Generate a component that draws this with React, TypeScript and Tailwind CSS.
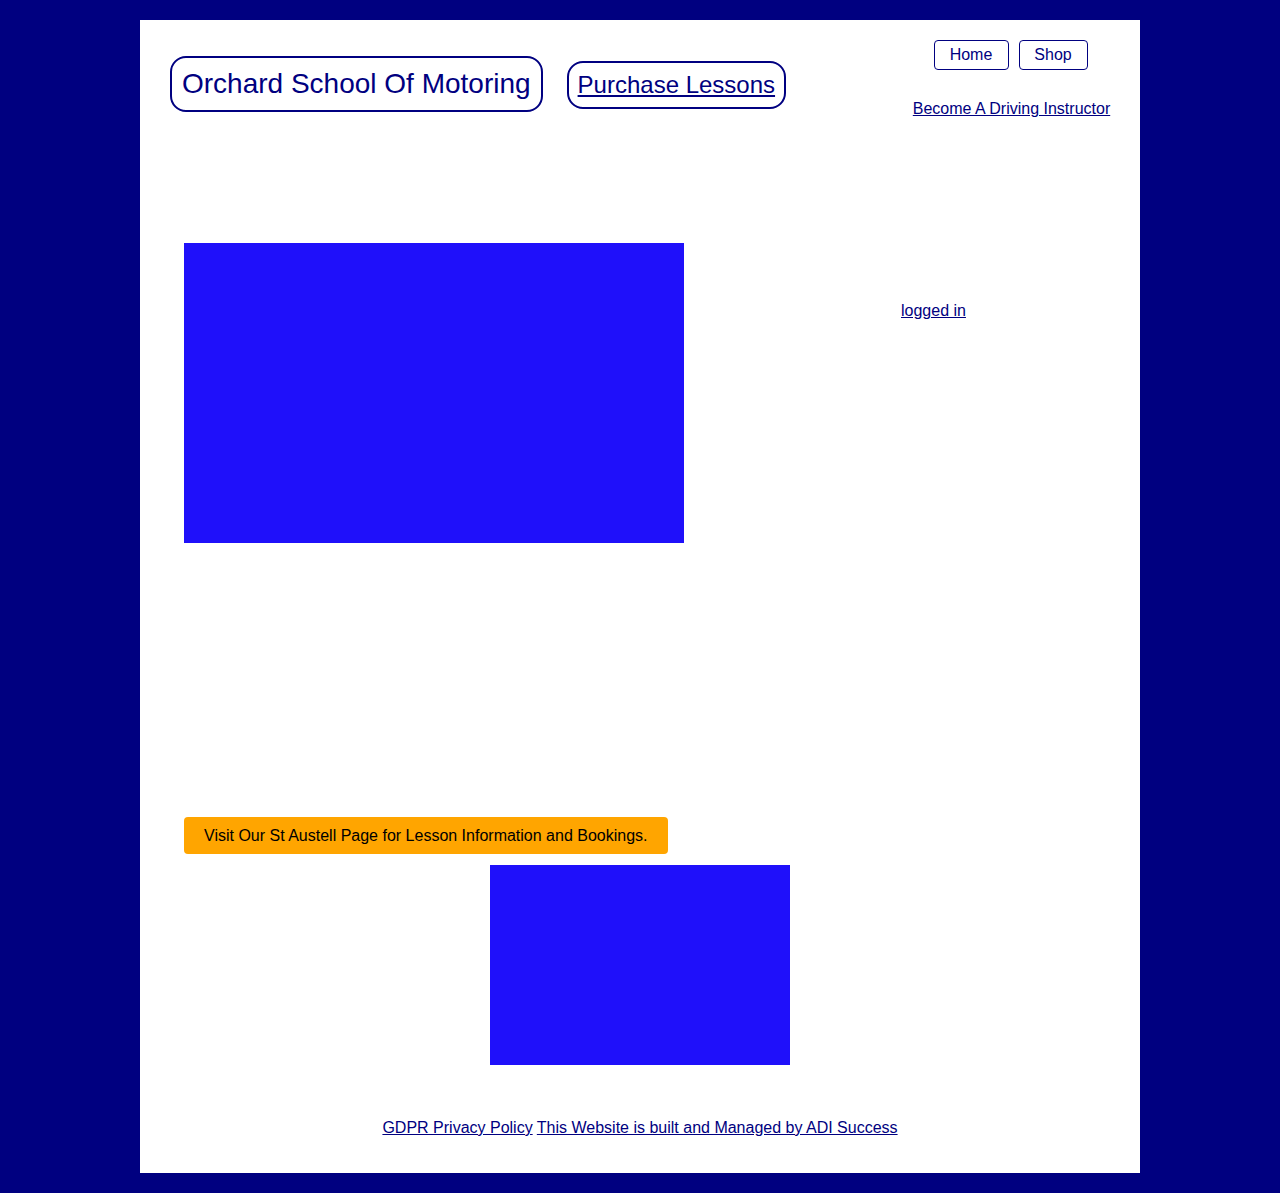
import React from "react";

export default function App() {
  const navy = "text-[#000080]";
  return (
    <div className="min-h-[1193px] bg-[#000080] py-5" style={{ fontFamily: '"Liberation Sans", Arial, sans-serif' }}>
      <div className="mx-auto w-[1000px] h-[1153px] bg-white flex flex-col">
        {/* Header */}
        <div className="flex justify-between pl-[30px] pr-[30px] pt-5">
          <div className="flex items-center gap-6 pt-4 self-start">
            <div className={`border-2 border-[#000080] rounded-[16px] px-[10px] h-[56px] flex items-center text-[28px] ${navy}`}>
              Orchard School Of Motoring
            </div>
            <a href="#" className={`border-2 border-[#000080] rounded-[16px] px-[9px] h-[48px] mt-[2px] flex items-center text-[24px] underline ${navy}`}>
              Purchase Lessons
            </a>
          </div>
          <div className="flex flex-col items-center w-[197px]">
            <div className="flex gap-[10px] -translate-x-px">
              <div className={`border border-[#000080] rounded-[4px] w-[75px] h-[30px] flex items-center justify-center text-[16px] ${navy}`}>Home</div>
              <div className={`border border-[#000080] rounded-[4px] w-[69px] h-[30px] flex items-center justify-center text-[16px] ${navy}`}>Shop</div>
            </div>
            <a href="#" className={`mt-[27px] text-[16px] underline whitespace-nowrap ${navy}`}>Become A Driving Instructor</a>
          </div>
        </div>

        {/* Main */}
        <div className="flex pl-[44px] mt-[122px]">
          <div className="w-[500px] h-[300px] bg-[#1f10fa]" />
          <div className="ml-[217px] mt-[56px]">
            <a href="#" className={`text-[16px] underline ${navy}`}>logged in</a>
          </div>
        </div>

        <div className="pl-[44px] mt-[274px]">
          <div className="inline-flex items-center h-[37px] px-5 bg-[#ffa500] rounded-[4px] text-[16px] text-black">
            Visit Our St Austell Page for Lesson Information and Bookings.
          </div>
        </div>

        <div className="flex justify-center mt-[11px]">
          <div className="w-[300px] h-[200px] bg-[#1f10fa]" />
        </div>

        <div className={`text-center mt-[51px] text-[16px] ${navy}`}>
          <a href="#" className="underline">GDPR Privacy Policy</a>{" "}
          <a href="#" className="underline">This Website is built and Managed by ADI Success</a>
        </div>
      </div>
    </div>
  );
}
